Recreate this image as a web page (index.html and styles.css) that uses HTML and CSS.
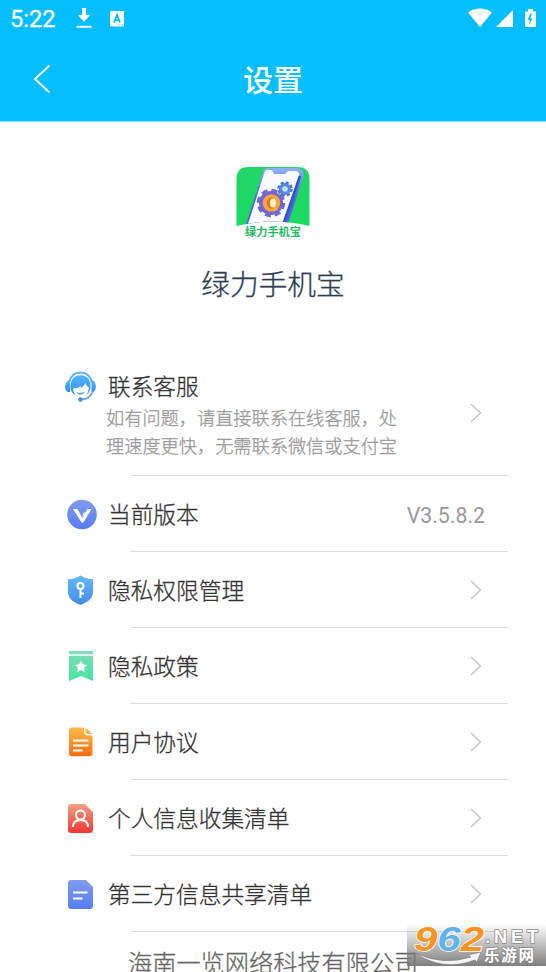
FILE: index.html
```html
<!DOCTYPE html>
<html lang="zh-CN">
<head>
<meta charset="utf-8">
<title>设置</title>
<link rel="stylesheet" href="styles.css">
</head>
<body>
<div class="screen">
  <header class="header">
    <div class="status">
      <span class="time">5:22</span>
      <svg class="download" width="16" height="22" viewBox="0 0 16 22" fill="#fff"><path d="M6 1h4v7h4l-6 7-6-7h4zM.5 18.8h15v2H.5z"/></svg>
      <svg class="letter" width="14" height="16" viewBox="0 0 14 16"><rect width="14" height="15.5" rx="1.2" fill="#fff"/><path d="M4 11.500 7 4l3 7.500M5 9.200h4" fill="none" stroke="#04beff" stroke-width="1.800"/><path d="M7.500 14h5.500" stroke="#7edfff"/></svg>
      <span class="spacer"></span>
      <svg class="signals" width="69" height="22" viewBox="0 0 69 22" fill="#fff"><path d="M0 5.500C6 .300 18 .300 24 5.500L12 20zM28 20 45 3v17zM57 4.500h3V2h5v2.500h3V20H57z"/><path d="M62.500 6.500 59.500 13h2.200l-.7 5 3.500-6.500h-2.100l1.600-5z" fill="#04beff"/></svg>
    </div>
    <div class="nav">
      <svg class="back" width="18" height="30" viewBox="0 0 18 30"><path d="M16.500 1.500 2 15l14.500 13.500" fill="none" stroke="#fff" stroke-width="1.900"/></svg>
      <h1>设置</h1>
    </div>
  </header>

  <section class="brand">
    <svg width="74" height="74" viewBox="0 0 74 74">
      <defs>
        <linearGradient id="green" x2="0" y2="1"><stop stop-color="#22d568"/><stop offset="1" stop-color="#18dc5e"/></linearGradient>
        <linearGradient id="phone" x2="0" y2="1"><stop stop-color="#8fb1f6"/><stop offset=".5" stop-color="#4a67df"/><stop offset="1" stop-color="#665cdd"/></linearGradient>
        <clipPath id="tile"><path d="M.5 59V12Q.5 0 12.500 0h49q12 0 12 12v47Q37 50 .5 59z"/></clipPath>
      </defs>
      <g clip-path="url(#tile)">
        <rect width="74" height="74" fill="url(#green)"/>
        <path d="M31 1h31q7 2 5 9L51 60H9L27 5q1-4 4-4z" fill="url(#phone)"/>
        <path d="M31 3h5l2 4h11l3-3h8q4 1 3 5L46 60H11L28 7q1-4 3-4z" fill="#f8faff"/>
        <path d="M64 9 47 58" stroke="#3053cc" stroke-width="2.500"/>
        <circle cx="49" cy="22" r="6" fill="#5c88e9"/><circle cx="49" cy="22" r="6.500" fill="none" stroke="#4876da" stroke-width="2.500" stroke-dasharray="3 2.100"/><circle cx="49" cy="22" r="2.700" fill="#b8e8fc"/>
        <circle cx="35" cy="36" r="12" fill="#7267d3"/><circle cx="35" cy="36" r="12" fill="none" stroke="#7267d3" stroke-width="4.500" stroke-dasharray="5.700 3.725"/>
        <circle cx="35.500" cy="36" r="8.700" fill="#f7a63b"/><ellipse cx="35.500" cy="36" rx="4.800" ry="5.700" fill="#dc7c23"/><ellipse cx="37" cy="36" rx="3" ry="4.600" fill="#fff4c8"/>
      </g>
      <text x="37" y="68.500" text-anchor="middle" class="logo-text">绿力手机宝</text>
    </svg>
    <h2>绿力手机宝</h2>
  </section>

  <main class="list">
    <div class="row support">
      <svg class="icon" width="34" height="34" viewBox="0 0 34 34">
        <defs><linearGradient id="blue" x2="0" y2="1"><stop stop-color="#55b6ff"/><stop offset="1" stop-color="#368bea"/></linearGradient></defs>
        <path d="M5 13Q7 2.500 16.500 2.500T28 13" fill="none" stroke="#55b3fc" stroke-width="2"/>
        <path d="M6.500 19V14Q8 5.200 16.500 5.200T26.500 14v5q-2 7-10 7T6.500 19z" fill="url(#blue)"/>
        <path d="M9 18.500q5 0 8-2.500l-1 2.500q4-2 5.500-5.500.5 3 3.500 4.500-1 9.500-8.500 9.500Q10 27 9 18.500z" fill="#fff"/>
        <path d="M6 10.500v11.500H4Q1 20 1 16.500t3-6zM27.500 10.500V22h2q2.500-2 2.500-5.500t-2.500-6z" fill="url(#blue)"/>
        <path d="M12.500 22q4 2 8-.5-1 3.300-4 3.300t-4-2.800z" fill="#4da6f8"/>
        <path d="M29 21q-3 8.500-12 8.500" fill="none" stroke="#4a9ff4" stroke-width="1.500"/><circle cx="16.500" cy="29.500" r="2.300" fill="#398fef"/>
      </svg>
      <div class="text"><div class="label">联系客服</div><p>如有问题，请直接联系在线客服，处<br>理速度更快，无需联系微信或支付宝</p></div>
      <svg class="arrow" width="12" height="20" viewBox="0 0 12 20"><path d="m1 1 9.500 9L1 19"/></svg>
    </div>
    <div class="row">
      <svg class="icon" width="34" height="34" viewBox="0 0 34 34">
        <defs><linearGradient id="indigo" x2="0" y2="1"><stop stop-color="#829cee"/><stop offset="1" stop-color="#557cf1"/></linearGradient></defs>
        <circle cx="18" cy="17.500" r="14.800" fill="url(#indigo)"/><path d="M9 12h4.300l5.200 9 5-9h4L20 24.500q-1.500 2.500-3 0z" fill="#fff"/><path d="m19 16.500 3-2-3.500 6z" fill="#fff"/>
      </svg>
      <span class="label">当前版本</span><span class="version">V3.5.8.2</span>
    </div>
    <div class="row">
      <svg class="icon" width="34" height="34" viewBox="0 0 34 34">
        <defs><linearGradient id="shield" x2="0" y2="1"><stop stop-color="#65b8f9"/><stop offset="1" stop-color="#468bea"/></linearGradient></defs>
        <path d="M16.500 2.500Q22 6 29 6.300V19c0 6-4 9.500-12.500 13C8 28.500 4 25 4 19V6.300Q11 6 16.500 2.500z" fill="url(#shield)"/><g fill="none" stroke="#fff" stroke-width="2"><circle cx="16.500" cy="13" r="3"/><path d="M16.500 16v9M16.500 20.500h3.500"/></g>
      </svg>
      <span class="label">隐私权限管理</span><svg class="arrow" width="12" height="20" viewBox="0 0 12 20"><path d="m1 1 9.500 9L1 19"/></svg>
    </div>
    <div class="row">
      <svg class="icon" width="34" height="34" viewBox="0 0 34 34">
        <defs><linearGradient id="mint" x2="0" y2="1"><stop stop-color="#7adbb6"/><stop offset="1" stop-color="#43e8a0"/></linearGradient></defs>
        <path d="M5 2h24v3.300H5z" fill="#83debb"/><path d="M5 6.800h24V32l-12-5-12 5z" fill="url(#mint)"/><path d="m17 11.500 1.900 3.700 4.200.7-3 2.900.7 4.200-3.800-2-3.800 2 .7-4.200-3-2.900 4.200-.7z" fill="#fff"/>
      </svg>
      <span class="label">隐私政策</span><svg class="arrow" width="12" height="20" viewBox="0 0 12 20"><path d="m1 1 9.500 9L1 19"/></svg>
    </div>
    <div class="row">
      <svg class="icon" width="34" height="34" viewBox="0 0 34 34">
        <defs><linearGradient id="orange" x2="0" y2="1"><stop stop-color="#f8bc4b"/><stop offset="1" stop-color="#ff6b0c"/></linearGradient></defs>
        <path d="M8 2.500h12v4q0 4 4 4h4.500V28q0 3.300-3.300 3.300H8Q5 31.300 5 28V5.500q0-3 3-3z" fill="url(#orange)"/><path d="m21.500 2.500 7 6.500h-5q-2 0-2-2z" fill="#f8b747"/><path d="M9 15.500h15.500M9 20.500h15.500M9 25.500h9.500" stroke="#fff" stroke-width="1.800"/>
      </svg>
      <span class="label">用户协议</span><svg class="arrow" width="12" height="20" viewBox="0 0 12 20"><path d="m1 1 9.500 9L1 19"/></svg>
    </div>
    <div class="row">
      <svg class="icon" width="34" height="34" viewBox="0 0 34 34">
        <defs><linearGradient id="red" x2="0" y2="1"><stop stop-color="#f2a083"/><stop offset="1" stop-color="#f03735"/></linearGradient></defs>
        <path d="M7 3h14l8 8v17.500q0 3.500-3.500 3.500h-18Q4 32 4 28.500V6q0-3 3-3z" fill="url(#red)"/><g fill="none" stroke="#fff" stroke-width="2"><circle cx="16.500" cy="14" r="4.500"/><path d="M9 26q0-7 7.500-7t7.500 7"/></g>
      </svg>
      <span class="label">个人信息收集清单</span><svg class="arrow" width="12" height="20" viewBox="0 0 12 20"><path d="m1 1 9.500 9L1 19"/></svg>
    </div>
    <div class="row">
      <svg class="icon" width="34" height="34" viewBox="0 0 34 34">
        <path d="M7 3h15l7 7v18.500q0 3.500-3.500 3.500h-18Q4 32 4 28.500V6q0-3 3-3z" fill="url(#indigo)"/><path d="M9 15.500h14.500M9 21.500h9.500" stroke="#fff" stroke-width="2"/>
      </svg>
      <span class="label">第三方信息共享清单</span><svg class="arrow" width="12" height="20" viewBox="0 0 12 20"><path d="m1 1 9.500 9L1 19"/></svg>
    </div>
  </main>
  <footer class="company">海南一览网络科技有限公司</footer>

  <svg class="watermark" width="139" height="42" viewBox="0 0 139 42">
    <defs><linearGradient id="fade" x2="0" y2="1"><stop stop-color="#777" stop-opacity="0"/><stop offset="1" stop-color="#777" stop-opacity=".95"/></linearGradient></defs>
    <rect width="139" height="42" fill="url(#fade)"/>
    <path d="M8 29q28 13 56 4l-3-2 13-3-4 10-2-2q-32 12-60-7z" fill="#f4f4f4" stroke="#777" stroke-width=".6"/>
    <text x="7" y="26.500" textLength="70" lengthAdjust="spacingAndGlyphs" class="digits"><tspan fill="#f99425">9</tspan><tspan fill="#62b4e8">6</tspan><tspan fill="#f99425">2</tspan></text>
    <text x="78" y="19" textLength="53" lengthAdjust="spacing" class="net">.NET</text>
    <text x="77" y="37" textLength="50" class="site">乐游网</text>
  </svg>
</div>
</body>
</html>
```
FILE: styles.css
```css
* { box-sizing: border-box; }
body {
  margin: 0;
  overflow: hidden;
  background: #fff;
  font-family: Roboto, "Noto Sans CJK SC", sans-serif;
}
h1, h2, p { margin: 0; font-weight: 400; }
svg { display: block; flex: none; }
.screen {
  position: relative;
  width: 546px;
  height: 972px;
  overflow: hidden;
}
.header {
  height: 122px;
  background: #04beff;
  border-bottom: 1px solid #7edfff;
  color: #fff;
}
.status {
  display: flex;
  align-items: center;
  height: 38px;
  padding: 0 10px;
}
.time {
  width: 66px;
  font-size: 23.7px;
  -webkit-text-stroke: .3px;
  line-height: 38px;
}
.download { margin-top: -2px; }
.letter { margin-left: 18px; margin-top: -1px; }
.signals { margin: -2px -1px 0 0; }
.spacer { flex: 1; }
.nav {
  display: grid;
  grid-template-columns: 80px 1fr 80px;
  align-items: center;
  height: 84px;
}
.back { margin: -2px 0 0 33px; }
.nav h1 {
  padding-top: 2px;
  font-size: 30px;
  font-weight: 500;
  line-height: 44px;
  text-align: center;
}
.brand {
  display: flex;
  flex-direction: column;
  align-items: center;
  height: 228px;
  padding-top: 45px;
}
.brand h2 {
  margin-top: 22px;
  color: #2c3e50;
  font-size: 28.7px;
  font-weight: 300;
  line-height: 44px;
}
.brand h2, .label, .text p, .company { -webkit-text-stroke: .3px; }
.logo-text {
  font: 700 11.2px "Noto Sans CJK SC", sans-serif;
  fill: #1dbd60;
}
.row {
  position: relative;
  display: flex;
  align-items: center;
  height: 76px;
  padding: 0 64px;
}
.row::after {
  content: "";
  position: absolute;
  left: 130px;
  right: 38px;
  bottom: 0;
  height: 1px;
  background: #dcdcdc;
}
.icon { margin-right: 10px; }
.label {
  padding-top: 4px;
  color: #333;
  font-size: 22.7px;
  font-weight: 300;
  line-height: 34px;
}
.support { height: 126px; align-items: flex-start; }
.support .icon { margin-top: 20px; }
.support .label { padding-top: 3px; }
.text { padding-top: 18px; }
.text p {
  margin: 0 0 0 -2px;
  color: #999;
  font-size: 18.2px;
  font-weight: 300;
  line-height: 27.5px;
}
.arrow {
  margin-left: auto;
  fill: none;
  stroke: #c8c8c8;
  stroke-width: 1.6;
}
.support .arrow { margin-top: 53px; }
.version {
  margin: 2px -3px 0 auto;
  color: #999;
  font-size: 21.3px;
}
.company {
  padding-left: 128px;
  padding-top: 14px;
  color: #666;
  font-size: 24.2px;
  font-weight: 300;
  line-height: 36px;
  white-space: nowrap;
}
.watermark { position: absolute; left: 407px; top: 924px; }
.digits {
  font: italic 700 35px "Liberation Sans", sans-serif;
  stroke: #fff;
  stroke-width: 1.5;
  paint-order: stroke;
}
.net, .site {
  fill: #fff;
  stroke: #888;
  stroke-width: 1.5;
  paint-order: stroke;
}
.net { font: 700 18px "Liberation Sans", sans-serif; }
.site { font: 700 15.500px "Noto Sans CJK SC", sans-serif; }
```
